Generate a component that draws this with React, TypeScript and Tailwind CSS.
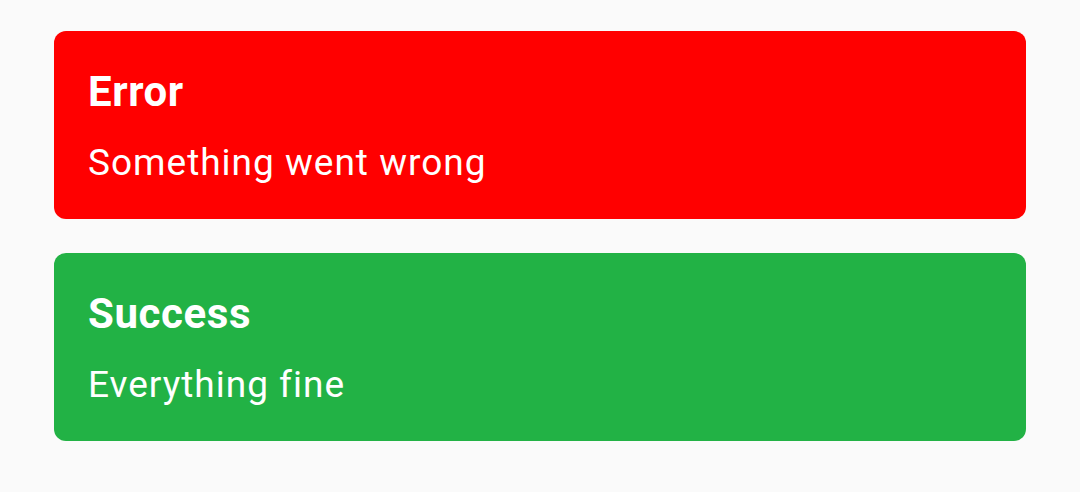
export default function App() {
  return (
    <div className="min-h-[492px] w-[1080px] bg-[#fafafa] px-[54px] pt-[31px] font-['Roboto',sans-serif]">
      <div className="flex flex-col gap-[34px]">
        <div className="flex flex-col rounded-[12px] bg-[#ff0000] px-[34px] pt-[36px] pb-[35px] text-white">
          <div className="text-[42px] font-bold leading-[49px] tracking-[0.6px]">Error</div>
          <div className="mt-[25px] text-[37px] leading-[43px] tracking-[1px]">Something went wrong</div>
        </div>
        <div className="flex flex-col rounded-[12px] bg-[#22b245] px-[34px] pt-[36px] pb-[35px] text-white">
          <div className="text-[42px] font-bold leading-[49px] tracking-[0.6px]">Success</div>
          <div className="mt-[25px] text-[37px] leading-[43px] tracking-[1px]">Everything fine</div>
        </div>
      </div>
    </div>
  );
}
